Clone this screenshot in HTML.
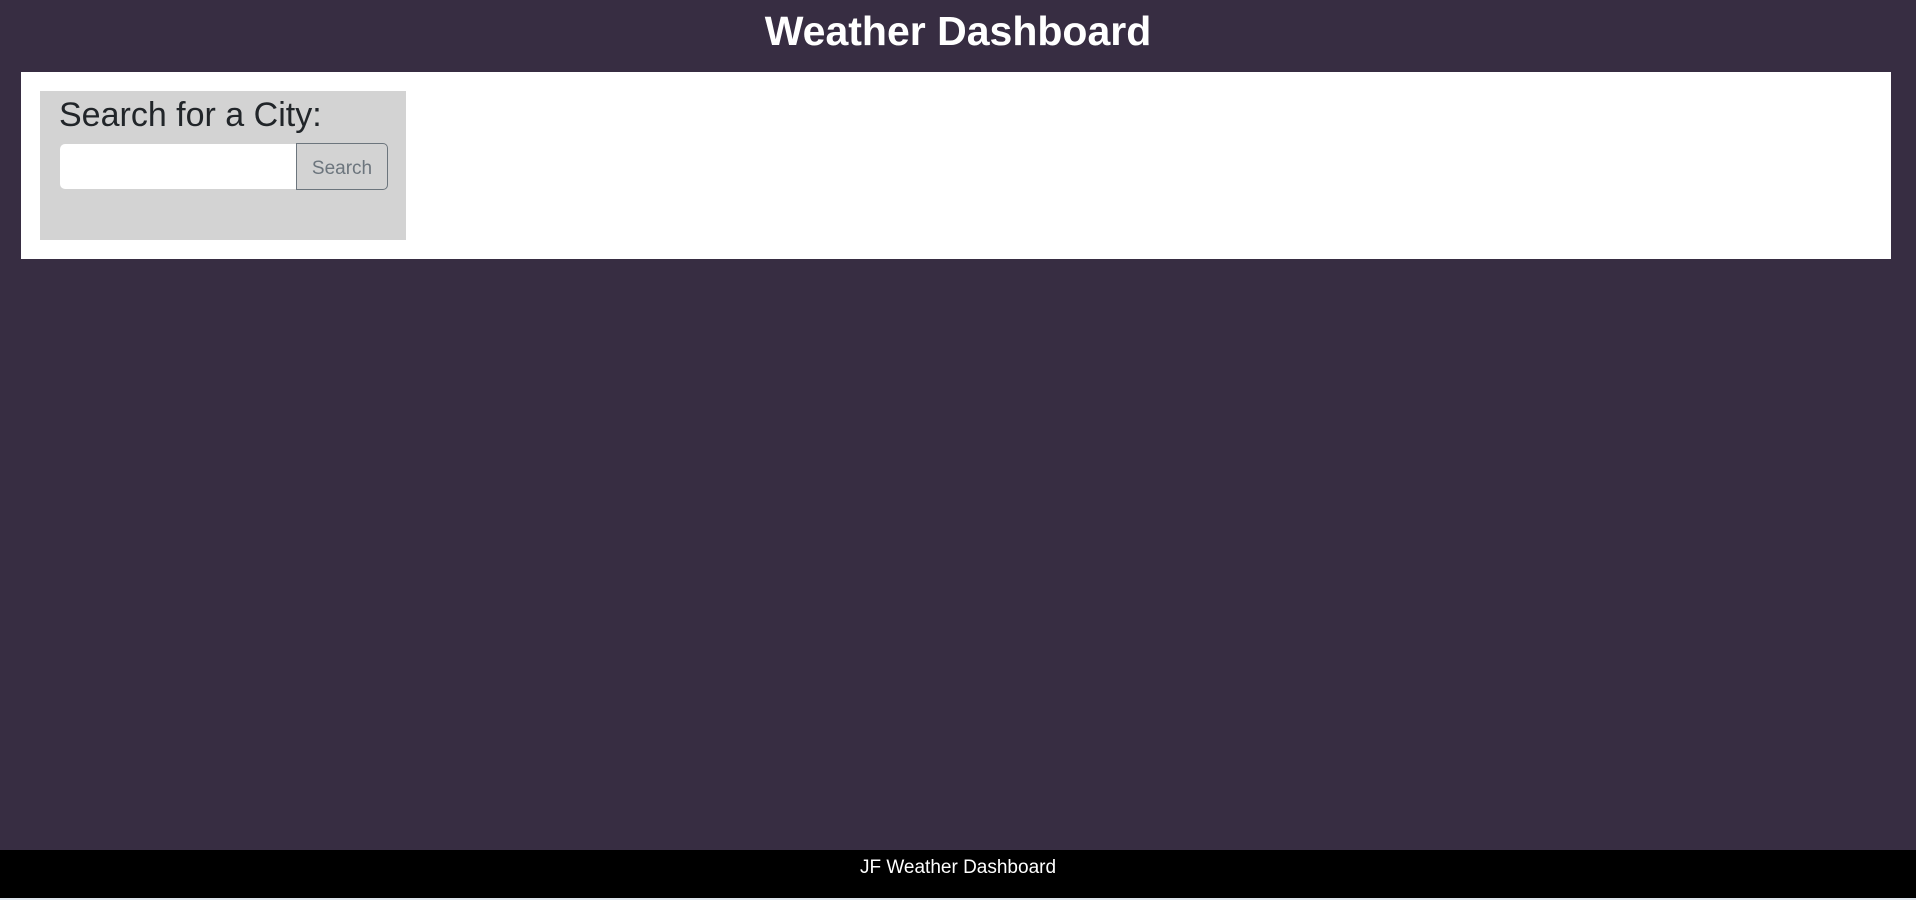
<!DOCTYPE html>
<html><head><style>
html,body{margin:0;padding:0;}
body{width:1916px;height:900px;background:#372d42;position:relative;overflow:hidden;font-family:"Liberation Sans",sans-serif;}
h1{position:absolute;left:0;width:1916px;top:4px;margin:0;text-align:center;color:#fff;font-size:41px;font-weight:bold;line-height:54px;}
.panel{position:absolute;left:21px;top:72px;width:1870px;height:187px;background:#fff;}
.box{position:absolute;left:40px;top:91px;width:366px;height:149px;background:#d3d3d3;}
.box h2{position:absolute;left:19px;top:3px;margin:0;font-size:34px;font-weight:normal;color:#212529;line-height:42px;white-space:nowrap;}
.inp{position:absolute;left:20px;top:53px;width:236px;height:45px;background:#fff;border-radius:5px 0 0 5px;}
.btn{position:absolute;left:256px;top:52px;width:90px;height:45px;border:1px solid #6c757d;border-radius:0 5px 5px 0;color:#6c757d;font-size:19px;text-align:center;line-height:49px;}
footer{position:absolute;left:0;top:850px;width:1916px;height:48px;background:#000;color:#fff;text-align:center;font-size:19px;line-height:36px;}
.strip{position:absolute;left:0;top:898px;width:1916px;height:2px;background:#dfe6ee;}
</style></head><body>
<h1>Weather Dashboard</h1>
<div class="panel"></div>
<div class="box"><h2>Search for a City:</h2><div class="inp"></div><div class="btn">Search</div></div>
<footer>JF Weather Dashboard</footer>
<div class="strip"></div>
</body></html>
